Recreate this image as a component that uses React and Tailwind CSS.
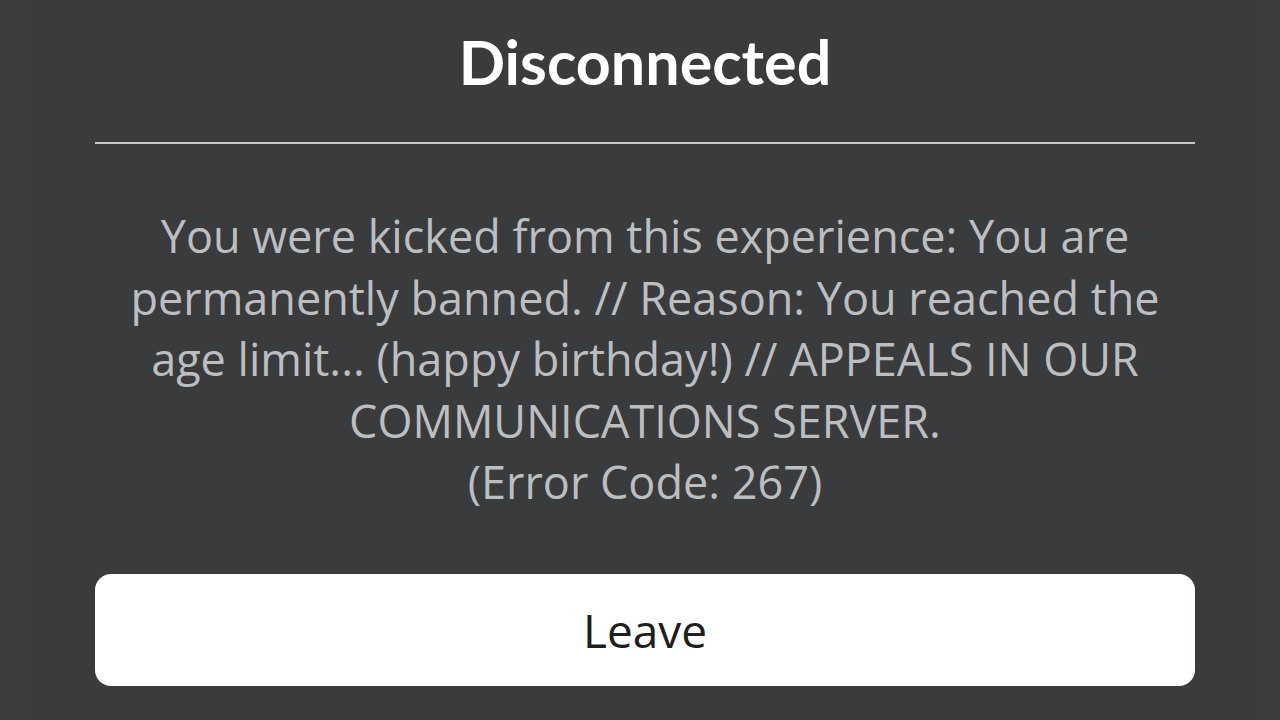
import React from "react";

const lines = [
  "You were kicked from this experience: You are",
  "permanently banned. // Reason: You reached the",
  "age limit... (happy birthday!) // APPEALS IN OUR",
  "COMMUNICATIONS SERVER.",
  "(Error Code: 267)",
];

const App = () => {
  return (
    <div className="w-[1280px] h-[720px] bg-[#3a3c3e] flex overflow-hidden">
      {/* prompt panel */}
      <div className="ml-[34px] w-[1222px] h-full bg-[#393b3d] border-x border-[#36383a] flex flex-col items-center">
        <h1 className="mt-[24px] h-[76px] text-[61px] leading-[76px] font-bold text-white font-['Lato',sans-serif]">
          Disconnected
        </h1>
        <div className="mt-[42px] w-[1100px] h-[2px] bg-[#c8c8c8]" />
        <div className="mt-[61px] flex flex-col items-center text-[45px] leading-[61.5px] text-[#bdbebf] font-['Open_Sans',sans-serif]">
          {lines.map((line, i) => (
            <p key={i} className="h-[61.5px] whitespace-nowrap">
              {line}
            </p>
          ))}
        </div>
        <button className="mt-[61px] w-[1100px] h-[112px] shrink-0 bg-white rounded-[16px] flex items-center justify-center text-[46px] leading-[62px] text-[#1e1e1e] font-['Open_Sans',sans-serif]">
          Leave
        </button>
      </div>
    </div>
  );
};

export default App;
